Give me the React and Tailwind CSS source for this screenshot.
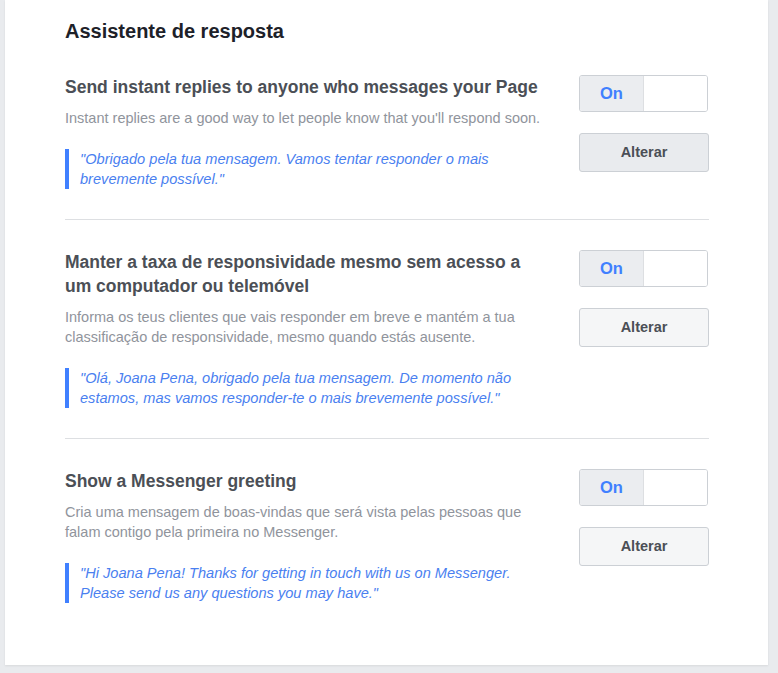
import React from 'react';

const sections = [
  {
    title: 'Send instant replies to anyone who messages your Page',
    desc: "Instant replies are a good way to let people know that you'll respond soon.",
    quote: '"Obrigado pela tua mensagem. Vamos tentar responder o mais brevemente possível."',
    active: true,
  },
  {
    title: 'Manter a taxa de responsividade mesmo sem acesso a um computador ou telemóvel',
    desc: 'Informa os teus clientes que vais responder em breve e mantém a tua classificação de responsividade, mesmo quando estás ausente.',
    quote: '"Olá, Joana Pena, obrigado pela tua mensagem. De momento não estamos, mas vamos responder-te o mais brevemente possível."',
  },
  {
    title: 'Show a Messenger greeting',
    desc: 'Cria uma mensagem de boas-vindas que será vista pelas pessoas que falam contigo pela primeira no Messenger.',
    quote: '"Hi Joana Pena! Thanks for getting in touch with us on Messenger. Please send us any questions you may have."',
  },
];

function Toggle() {
  return (
    <div className="flex h-[37px] w-[129px] overflow-hidden rounded-[3px] border border-[#ccd0d5] bg-white">
      <div className="flex w-[64px] items-center justify-center border-r border-[#dddfe2] bg-[#ebedf0] text-[16.5px] font-bold text-[#4080ff]">
        On
      </div>
      <div className="flex-1 bg-white"></div>
    </div>
  );
}

export default function App() {
  return (
    <div className="min-h-screen bg-[#e9ebee] pl-[5px] pr-[10px] pb-[10px] font-['Liberation_Sans',Arial,sans-serif]">
      <div className="bg-white pl-[60px] pr-[59px] pt-[18px] pb-[62px] shadow-[0_1px_2px_rgba(0,0,0,0.08)]">
        {/* Heading */}
        <h1 className="text-[20px] font-bold leading-[26px] text-[#1d2129]">Assistente de resposta</h1>

        <div className="mt-[31px]">
          {sections.map((s, i) => (
            <div key={i}>
              {i > 0 && <div className="my-[30px] h-px bg-[#dddfe2]"></div>}
              <div className="flex justify-between">
                <div className="w-[480px]">
                  <div className="text-[17.5px] font-bold leading-[24px] text-[#4b4f56]">{s.title}</div>
                  <div className="mt-[9px] text-[14.5px] leading-[20px] text-[#90949c]">{s.desc}</div>
                  <div className="mt-[21px] border-l-4 border-[#4080ff] pl-[11px] text-[14.6px] italic leading-[20px] text-[#4a7ff0]">
                    {s.quote}
                  </div>
                </div>
                <div className="flex flex-col gap-[21px]">
                  <Toggle />
                  <button
                    className={
                      'h-[39px] w-[130px] rounded-[3px] border border-[#ccd0d5] text-[14.5px] font-bold text-[#4b4f56] ' +
                      (s.active ? 'bg-[#e9ebee]' : 'bg-[#f5f6f7]')
                    }
                  >
                    Alterar
                  </button>
                </div>
              </div>
            </div>
          ))}
        </div>
      </div>
    </div>
  );
}
